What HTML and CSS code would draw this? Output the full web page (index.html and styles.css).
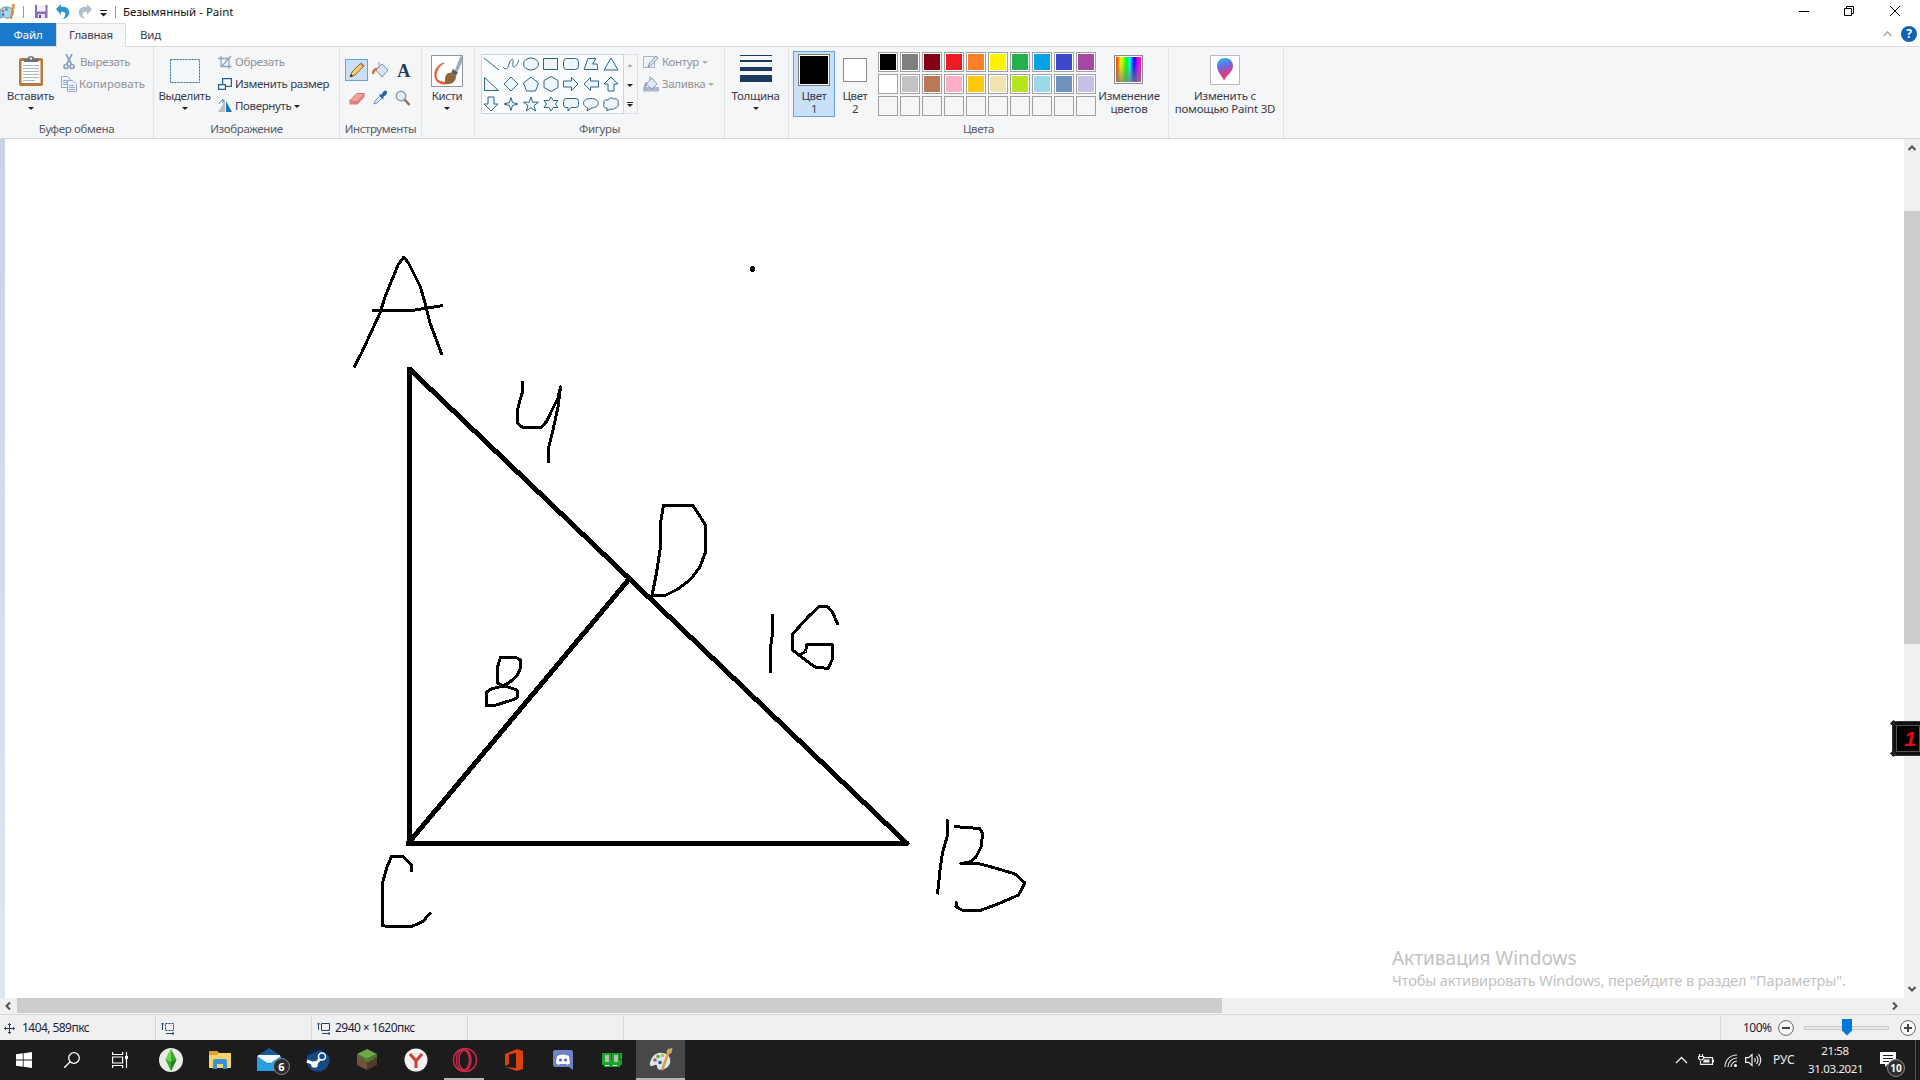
FILE: index.html
```html
<!DOCTYPE html>
<html lang="ru">
<head>
<meta charset="UTF-8">
<title>Безымянный - Paint</title>
<link rel="stylesheet" href="styles.css">
</head>
<body>
<div class="window">
    <header class="titlebar">
        <svg class="logo" width="16" height="18" viewBox="0 0 16 18">
            <path d="M0 7C3 3 10 3 13 7c1 3 0 7-5 8-3 1-3-2-5-1l-3 1z" fill="#a9d5ec" stroke="#5792b4"/>
            <circle cx="3" cy="8" r="1.3" fill="#e0524a"/><circle cx="6.500" cy="6.500" r="1.300" fill="#4aa53c"/><circle cx="3" cy="11.500" r="1.300" fill="#3468b8"/>
            <path d="M13 5L11 16" stroke="#d98b2f" stroke-width="2"/><path d="M11.500 5l.5-4h3l-.5 5z" fill="#dc9d53"/>
        </svg>
        <i class="bar"></i>
        <svg class="save" width="15" height="15" viewBox="0 0 15 15">
            <path d="M1 1h12.500v13H1z" fill="#8e6bb0"/><path d="M3 1h8.500v6.500H3z" fill="#f3f0f8"/><path d="M4 10h7v4H4z" fill="#e8e2f0"/><path d="M5 11h2v3H5z" fill="#654389"/>
        </svg>
        <svg class="undo" width="14" height="15" viewBox="0 0 14 15">
            <path d="M0 5l5-5v3c6-1 9 3 8 7-1 3-3 4-6 5 3-3 4-8-2-7v3z" fill="#2c94d1"/>
        </svg>
        <svg class="redo" width="14" height="15" viewBox="0 0 14 15">
            <path d="M14 5L9 0v3C3 2 0 6 1 10c1 3 3 4 6 5-3-3-4-8 2-7v3z" fill="#b3bfce"/>
        </svg>
        <svg class="more" width="7" height="7" viewBox="0 0 7 7"><path d="M0 0h7v1H0zM0 3h7L3.500 6.500z" fill="#222"/></svg>
        <i class="bar"></i>
        <span class="title">Безымянный - Paint</span>
        <svg class="controls" width="102" height="12" viewBox="0 0 102 12" fill="none" stroke="#000">
            <path d="M0 6.500h10"/>
            <path d="M45.500 3.500h7v7h-7zM47.500 3.500v-2h7v7h-2"/>
            <path d="M91 1l10 10M101 1L91 11"/>
        </svg>
    </header>
    <nav class="tabs">
        <a class="tab file">Файл</a>
        <a class="tab active">Главная</a>
        <a class="tab view">Вид</a>
        <svg class="collapse" width="9" height="6" viewBox="0 0 9 6"><path d="M.5 5l4-4 4 4" fill="none" stroke="#aaa" stroke-width="1.500"/></svg>
        <span class="help">?</span>
    </nav>
    <section class="ribbon">
        <div class="group clipboard">
            <div class="tools">
                <div class="big paste">
                    <svg width="28" height="32" viewBox="0 0 28 32">
                        <rect x="2" y="3" width="24" height="28" rx="2" fill="#b57a3c"/>
                        <path d="M4.500 6h19v22h-19z" fill="#fdfdfd"/>
                        <path d="M6 10.500h16M6 13.500h16M6 16.500h16M6 19.500h16M6 22.500h16M6 25.500h12" stroke="#a9b8c9"/>
                        <path d="M7 7V4h3.500c0-4 7-4 7 0H21v3z" fill="#68727e"/><circle cx="14" cy="3.500" r="1.200" fill="#e8edf2"/>
                    </svg>
                    <span>Вставить</span>
                    <b class="arrow"></b>
                </div>
                <ul class="list">
                    <li class="off">
                        <svg width="16" height="16" viewBox="0 0 16 16" fill="none" stroke="#8c9fc0" stroke-width="1.700"><path d="M5 0l5.500 10.500M11 0L5.500 10.500"/><circle cx="5" cy="12.500" r="2"/><circle cx="11" cy="12.500" r="2"/></svg>
                        <span>Вырезать</span>
                    </li>
                    <li class="off copy">
                        <svg width="16" height="16" viewBox="0 0 16 16" fill="#eef3fa" stroke="#94a9c8"><path d="M.5.5h6l3 3v8h-9z"/><path d="M2 4.500h4M2 6.500h4M2 8.500h4"/><path d="M6.500 4.500h5l4 3.500v7.500h-9z"/><path d="M8 9.500h5M8 11.500h6M8 13.500h6"/></svg>
                        <span>Копировать</span>
                    </li>
                </ul>
            </div>
            <h4>Буфер обмена</h4>
        </div>
        <div class="group image">
            <div class="tools">
                <div class="big select">
                    <svg width="30" height="32" viewBox="0 0 30 32"><path d="M.5 4.500h29v23H.5z" fill="#f2f7fb" stroke="#2f6ba4" stroke-dasharray="2 1"/></svg>
                    <span>Выделить</span>
                    <b class="arrow"></b>
                </div>
                <ul class="list">
                    <li class="off">
                        <svg width="14" height="14" viewBox="0 0 14 14" fill="none" stroke="#8fa3c4" stroke-width="1.300"><path d="M3 1v10.500h10.500M0 3.500h11V14M4 11l9-10"/></svg>
                        <span>Обрезать</span>
                    </li>
                    <li>
                        <svg width="14" height="14" viewBox="0 0 14 14" fill="#f5fafd" stroke="#235f8f" stroke-width="1.200"><path d="M4.600 1.600h8.800v7.800H4.600z"/><path d="M.6 7.600h6.800v4.800H.6z"/></svg>
                        <span>Изменить размер</span>
                    </li>
                    <li>
                        <svg width="14" height="14" viewBox="0 0 14 14"><path d="M7 2v11H0z" fill="#b9bec5"/><path d="M8 2v11h6z" fill="#1b76b5"/><path d="M1 5c1-3 3-4 5-3M4 0l2.500 2L4 4" fill="none" stroke="#3a8ac6"/></svg>
                        <span>Повернуть</span>
                        <b class="arrow"></b>
                    </li>
                </ul>
            </div>
            <h4>Изображение</h4>
        </div>
        <div class="group instruments">
            <div class="instr">
                <a class="on"><svg width="18" height="18" viewBox="0 0 18 18"><path d="M2 16l2-5L13 2l3 3-9 9z" fill="#f2cf65" stroke="#8a6a35"/><path d="M12 3l1.500-1.500 3 3L15 6z" fill="#d76b64"/><path d="M2 16l1-3 2 2z" fill="#222"/></svg></a>
                <a><svg width="18" height="18" viewBox="0 0 18 18"><path d="M5 9l6-6 6 6-6 7z" fill="#d6e5f4" stroke="#7b8ea8"/><path d="M8 6V1" stroke="#8b95a5"/><path d="M1 13c0-5 3-7 7-6-3 1-4 3-5 6z" fill="#e06a2c"/></svg></a>
                <a class="letter">A</a>
                <a><svg width="18" height="18" viewBox="0 0 18 18"><path d="M1.500 12L9 4.500h7.500l-7 8z" fill="#f2a5a0" stroke="#c9716c"/><path d="M1.500 12h8v3.500h-8zM9.500 12.500l7-8v3.500l-7 7.500z" fill="#de807b"/></svg></a>
                <a><svg width="18" height="18" viewBox="0 0 18 18"><path d="M3 15l1-3 5-5 2 2-5 5z" fill="#d7eaf6" stroke="#6b96b5"/><path d="M8 6l1-1 1 1 3-4c3-1 4 1 2 4l-3 2 1 1-1 1z" fill="#2463a4"/></svg></a>
                <a><svg width="18" height="18" viewBox="0 0 18 18"><circle cx="7" cy="7" r="4.700" fill="#e0eefa" stroke="#8e9aa8" stroke-width="1.500"/><path d="M10.500 10.500L15.500 16" stroke="#8b6d52" stroke-width="2.500"/></svg></a>
            </div>
            <h4>Инструменты</h4>
        </div>
        <div class="group brushes">
            <div class="big">
                <svg class="framed" width="32" height="32" viewBox="0 0 32 32">
                    <path d="M.5.500h31v31H.5z" fill="#fff" stroke="#8d959e"/>
                    <path d="M13 8C4 10 1 22 7 27c4 3 9 2 12 0-6 1-14 0-14-6 0-5 3-10 8-13z" fill="#e35b2a" stroke="#e35b2a"/>
                    <path d="M24 15L29 2l2-1v6l-4 9z" fill="#9babb9"/><path d="M22 14l5 3-2 4-5-3z" fill="#546370"/><path d="M14 26c0-6 2-9 6-8l5 3c0 6-5 9-11 8z" fill="#92643b"/>
                </svg>
                <span>Кисти</span>
                <b class="arrow"></b>
            </div>
        </div>
        <div class="group shapes">
            <div class="tools">
                <div class="gallery">
                    <svg viewBox="0 0 16 16"><path d="M1 2l15 12"/></svg>
                    <svg viewBox="0 0 16 16"><path class="open" d="M0 11c3 4 5 1 6-3 2-6 5-6 4-1-1 5 2 7 6-3"/></svg>
                    <svg viewBox="0 0 16 16"><ellipse cx="8" cy="8" rx="7.500" ry="6"/></svg>
                    <svg viewBox="0 0 16 16"><path d="M.5 2.500h14v11H.5z"/></svg>
                    <svg viewBox="0 0 16 16"><rect x=".5" y="2.500" width="15" height="11" rx="3"/></svg>
                    <svg viewBox="0 0 16 16"><path d="M1 13.500L5 2.500h8L9.500 8h4.500l1 5.500z"/></svg>
                    <svg viewBox="0 0 16 16"><path d="M8 2l7 12H1z"/></svg>
                    <svg viewBox="0 0 16 16"><path d="M1.500 1.500l14 13h-14z"/></svg>
                    <svg viewBox="0 0 16 16"><path d="M8 1l7 7-7 7-7-7z"/></svg>
                    <svg viewBox="0 0 16 16"><path d="M8 1l7.500 6-3 8h-9l-3-8z"/></svg>
                    <svg viewBox="0 0 16 16"><path d="M8 .5l7 4v7l-7 4-7-4v-7z"/></svg>
                    <svg viewBox="0 0 16 16"><path d="M.5 5h8V1.500l6.500 6.500-6.500 6.500V11h-8z"/></svg>
                    <svg viewBox="0 0 16 16"><path d="M15.500 5h-8V1.500L1 8l6.500 6.500V11h8z"/></svg>
                    <svg viewBox="0 0 16 16"><path d="M5 15V8H1l7-7 7 7h-4v7z"/></svg>
                    <svg viewBox="0 0 16 16"><path d="M5 1v7H1l7 7 7-7h-4V1z"/></svg>
                    <svg viewBox="0 0 16 16"><path d="M8 1.500l1.500 5L15 8l-5.500 1.500-1.500 5-1.500-5L1 8l5.500-1.500z"/></svg>
                    <svg viewBox="0 0 16 16"><path d="M8 1l1.800 5.200h5.700L11 9.600l1.700 5.400L8 11.700 3.300 15 5 9.600.5 6.200h5.700z"/></svg>
                    <svg viewBox="0 0 16 16"><path d="M8 1l2.200 3.500H15L12.500 8l2.500 3.500h-4.800L8 15l-2.200-3.500H1L3.500 8 1 4.500h4.800z"/></svg>
                    <svg viewBox="0 0 16 16"><path d="M3 2.500h10q2.500 0 2.500 3v3q0 3-2.500 3H8L5 15v-3.500H3q-2.500 0-2.500-3v-3q0-3 2.500-3z"/></svg>
                    <svg viewBox="0 0 16 16"><path d="M5 12L4 15l5-3c9-1 8-9.500-1-9.500S-2 9.500 5 12z"/></svg>
                    <svg viewBox="0 0 16 16"><path d="M4 12c-3 0-4-2-3-4-1-3 1-5 4-4 2-3 5-2 6-1 3-1 5 2 4 4 1 3-1 5-3 5-2 2-4 1-5 1l-3 2z"/></svg>
                </div>
                <div class="scroller">
                    <span><b class="arrow up"></b></span>
                    <span><b class="arrow"></b></span>
                    <span><b class="arrow lined"></b></span>
                </div>
                <ul class="list">
                    <li class="off">
                        <svg width="16" height="14" viewBox="0 0 16 14"><path d="M.5 1.500h11v11H.5z" fill="#edf3f9" stroke="#aab5c4"/><path d="M5 12l1.500-4L13 1l2 2-6.500 7z" fill="#dce4ee" stroke="#8795ad"/></svg>
                        <span>Контур</span>
                        <b class="arrow dim"></b>
                    </li>
                    <li class="off">
                        <svg width="16" height="16" viewBox="0 0 16 16"><path d="M0 11h16v4.500H0z" fill="#aab8cc"/><path d="M3 8l6-6 5 6-5 5z" fill="#e1e9f2" stroke="#8f9fb6"/><path d="M7 4V0" stroke="#8f9fb6"/><path d="M1 11c0-4 2-5 4-5l-2 5z" fill="#8fa1bd"/></svg>
                        <span>Заливка</span>
                        <b class="arrow dim"></b>
                    </li>
                </ul>
            </div>
            <h4>Фигуры</h4>
        </div>
        <div class="group size">
            <div class="big">
                <svg width="32" height="32" viewBox="0 0 32 32" fill="#1f3a5f"><path d="M0 0h32v1H0zM0 5h32v2H0zM0 12h32v4H0zM0 20h32v7H0z"/></svg>
                <span>Толщина</span>
                <b class="arrow"></b>
            </div>
        </div>
        <div class="group colors">
            <div class="tools">
                <div class="color first"><i></i><span>Цвет<br>1</span></div>
                <div class="color second"><i></i><span>Цвет<br>2</span></div>
                <div class="palette">
                    <i class="c-black"></i><i class="c-gray"></i><i class="c-darkred"></i><i class="c-red"></i><i class="c-orange"></i><i class="c-yellow"></i><i class="c-green"></i><i class="c-blue"></i><i class="c-indigo"></i><i class="c-purple"></i>
                    <i class="c-white"></i><i class="c-silver"></i><i class="c-brown"></i><i class="c-pink"></i><i class="c-gold"></i><i class="c-cream"></i><i class="c-lime"></i><i class="c-sky"></i><i class="c-steel"></i><i class="c-lavender"></i>
                    <i></i><i></i><i></i><i></i><i></i><i></i><i></i><i></i><i></i><i></i>
                </div>
                <div class="big edit">
                    <i class="rainbow"></i>
                    <span>Изменение<br>цветов</span>
                </div>
            </div>
            <h4>Цвета</h4>
        </div>
        <div class="group paint3d">
            <div class="big">
                <svg class="framed" width="30" height="30" viewBox="0 0 30 30">
                    <defs>
                        <linearGradient id="drop" x1="0" y1="0" x2=".3" y2="1"><stop offset="0" stop-color="#20c5e8"/><stop offset=".45" stop-color="#6a6be0"/><stop offset=".75" stop-color="#d63b8e"/><stop offset="1" stop-color="#ee4a4a"/></linearGradient>
                    </defs>
                    <path d="M.5.500h29v29H.5z" fill="#fff" stroke="#b4b8bd"/>
                    <path d="M15 3c5 0 8 3.500 8 8 0 6-6 8-9 15-1-4-7-9-7-15 0-4.500 3-8 8-8z" fill="url(#drop)"/>
                </svg>
                <span>Изменить с<br>помощью Paint 3D</span>
            </div>
        </div>
    </section>
    <main class="workspace">
        <div class="edge"></div>
        <div class="sheet">
            <svg class="drawing" width="1899" height="859" viewBox="5 139 1899 859">
                <!-- triangle -->
                <g class="thick">
                    <path d="M408 844L409.500 843V369L907 843.500H408L630 578"/>
                </g>
                <!-- handwriting -->
                <g class="thin">
                    <path d="M354 367.500L362 352l18-39 5-16 13-32 6-8 5 7 11.500 23 4.500 16 5 20 12 32"/>
                    <path d="M372 310.500h40l31-5"/>
                    <path d="M522.500 381v11l-2.500 8-3 12v11l6 4.500h18l6-6.500 5-11 6-12 2.500-11-2.500 20-5 23-4.500 18v14.500"/>
                    <path d="M693 505.500h-29.500l-2.500 14.500-1 30-3.500 23-4.500 22.500h13l12-6 13-9.500 10-13 5.500-15v-27z"/>
                    <path d="M500.500 657.500l-3 9.500v16l5.500 3 7-4 7.500-7 3-7v-8l-4.500-2.500z"/>
                    <path d="M503 686l-11.500 3-5 3v14l10-1 18.500-6 3-2.500-1-6.500-9-3z"/>
                    <path d="M772.500 614v20l-2 13v26"/>
                    <path d="M838 625l-5-12-5-6-9-.5-11 10.500-9 10-6 6.500-.5 16.500 9 7 13.500 10 13 1.500 4-8.500v-16h-25l-1.500 7.500-7.500 4.500"/>
                    <path d="M411.500 871.500V865l-8.500-8.500h-11.500L387 867l-4.500 16v42.500l4.500 1h24.500l11.500-5 7.500-9"/>
                    <path d="M948 819.500l-1 17.500-4.500 16-2.500 17-2.500 24.500"/>
                    <path d="M954 826.500l25.500 2 3 4.500-1 13-5.500 11-6 5-9 1.500h17l15.500 4 21.500 6.500 10 9-6.500 12-22 9.500-16.500 6-18.500-.5-5.500-3.500.5-5"/>
                </g>
                <circle cx="752.500" cy="269" r="3"/>
            </svg>
            <div class="watermark">
                <p>Активация Windows</p>
                <small>Чтобы активировать Windows, перейдите в раздел "Параметры".</small>
            </div>
        </div>
        <div class="vscroll">
            <svg width="8" height="6" viewBox="0 0 8 6"><path d="M.500 5L4 1.500 7.500 5"/></svg>
            <i></i>
            <svg width="8" height="6" viewBox="0 0 8 6"><path d="M.500 1L4 4.500 7.500 1"/></svg>
        </div>
        <div class="badge"><span>1</span></div>
    </main>
    <div class="hscroll">
        <svg width="6" height="8" viewBox="0 0 6 8"><path d="M5 .5L1.500 4 5 7.500"/></svg>
        <i></i>
        <svg width="6" height="8" viewBox="0 0 6 8"><path d="M1 .5L4.500 4 1 7.500"/></svg>
    </div>
    <footer class="status">
        <div class="cell pos">
            <svg width="11" height="11" viewBox="0 0 11 11" fill="none" stroke="#24426b"><path d="M5.500 0v11M0 5.500h11M4 2l1.500-1.500L7 2M4 9l1.500 1.500L7 9M2 4L.5 5.500 2 7M9 4l1.500 1.500L9 7"/></svg>
            <span>1404, 589пкс</span>
        </div>
        <div class="cell">
            <svg width="13" height="13" viewBox="0 0 13 13" fill="none" stroke="#24426b"><path d="M1.500 1v7M0 2.500L1.500 1 3 2.500M5 11.500h8M11.500 10l1.500 1.500-1.500 1.500"/><path d="M4.500 1.500h8v7h-8z" stroke-dasharray="2 1"/></svg>
        </div>
        <div class="cell">
            <svg width="13" height="13" viewBox="0 0 13 13" fill="none" stroke="#24426b"><path d="M1.500 1v7M0 2.500L1.500 1 3 2.500M5 11.500h8M11.500 10l1.500 1.500-1.500 1.500"/><path d="M4.500 1.500h8v7h-8z"/></svg>
            <span>2940 × 1620пкс</span>
        </div>
        <div class="cell"></div>
        <div class="cell rest"></div>
        <div class="zoom">
            <span>100%</span>
            <svg width="16" height="16" viewBox="0 0 16 16"><circle cx="8" cy="8" r="7.400"/><path d="M4 8h8"/></svg>
            <div class="slider"><i></i></div>
            <svg width="16" height="16" viewBox="0 0 16 16"><circle cx="8" cy="8" r="7.400"/><path d="M4 8h8M8 4v8"/></svg>
        </div>
    </footer>
</div>
<div class="taskbar">
    <a class="sys"><svg width="16" height="16" viewBox="0 0 16 16" fill="#fff"><path d="M0 2.300L6.800 1.300v6.300H0zM7.600 1.200L16 0v7.600H7.600zM0 8.400h6.800v6.300L0 13.700zM7.600 8.400H16V16l-8.400-1.200z"/></svg></a>
    <a class="sys"><svg width="16" height="16" viewBox="0 0 16 16" fill="none" stroke="#fff" stroke-width="1.300"><circle cx="10" cy="6" r="5.300"/><path d="M6.200 9.800L0 16"/></svg></a>
    <a class="sys"><svg width="16" height="16" viewBox="0 0 16 16" fill="none" stroke="#fff" stroke-width="1.200"><path d="M.600 0v2.500h10V0M.600 5h10v6H.600zM.600 16v-2.500h10V16M14.500 0v16"/><path d="M13 4h3v3h-3z" fill="#fff" stroke="none"/></svg></a>
    <a class="app"><svg width="26" height="26" viewBox="0 0 26 26"><circle cx="13" cy="13" r="12" fill="#e9e9e6"/><path d="M13 2l5.500 10.500L13 24 7.500 12.500z" fill="#39a82c"/><path d="M13 2l-5.500 10.500L13 15z" fill="#73d553"/><path d="M13 15l5.500-2.500L13 24z" fill="#1e7c20"/></svg></a>
    <a class="app"><svg width="24" height="24" viewBox="0 0 24 24"><path d="M1 3h8l2 2h12v15H1z" fill="#f7d56e"/><path d="M1 3h8l2 2-2 2H1z" fill="#dba52b"/><path d="M5 21v-8q0-2 2-2h10q2 0 2 2v8h-4v-5H9v5z" fill="#3993d3"/></svg></a>
    <a class="app mail"><svg width="26" height="24" viewBox="0 0 26 24"><path d="M1 8L13 0l12 8v15H1z" fill="#185a9d"/><path d="M2 7h22v8H2z" fill="#f1f8fd"/><path d="M1 8l12 8 12-8v15H1z" fill="#2a9fe3"/></svg><em class="count">6</em></a>
    <a class="app"><svg width="24" height="24" viewBox="0 0 24 24"><circle cx="12" cy="12" r="11.500" fill="#174a83"/><path d="M1 8A11.500 11.500 0 0 1 23 8L14 2z" fill="#0d2447"/><path d="M1 13l6 2.500 4-1 4-5" fill="none" stroke="#fff" stroke-width="3"/><circle cx="8.500" cy="16.500" r="3.300" fill="#fff"/><circle cx="16" cy="8.500" r="3.500" fill="#174a83" stroke="#fff" stroke-width="1.500"/></svg></a>
    <a class="app"><svg width="22" height="24" viewBox="0 0 22 24"><path d="M11 1l10 5-10 5L1 6z" fill="#6fa544"/><path d="M1 6l10 5v11L1 17z" fill="#74513a"/><path d="M21 6l-10 5v11l10-5z" fill="#523825"/><path d="M1 6l10 5 10-5v3l-3 1v2l-3 0-2 2-2 0-3-2-2-2-2 0-3-2z" fill="#4b7b2f"/></svg></a>
    <a class="app"><svg width="24" height="24" viewBox="0 0 24 24"><circle cx="12" cy="12" r="11.500" fill="#f1f1f1"/><path d="M6 6l6 7 6-7M12 12v8" fill="none" stroke="#d43c38" stroke-width="3"/></svg></a>
    <a class="app run"><svg width="26" height="26" viewBox="0 0 26 26" fill="none" stroke="#ce274a" stroke-width="1.500"><circle cx="13" cy="13" r="11.500"/><ellipse cx="13" cy="13" rx="6" ry="10"/><ellipse cx="11" cy="13" rx="6.500" ry="10.500"/></svg></a>
    <a class="app"><svg width="20" height="24" viewBox="0 0 20 24"><path d="M1 6l12-5 6 2v18l-6 2-12-4 11 1V5L5 6.500V16l-4 2z" fill="#d9430f"/></svg></a>
    <a class="app"><svg width="22" height="24" viewBox="0 0 22 24"><path d="M3 2h16q2 0 2 2v18l-4-3H3q-2 0-2-2V4q0-2 2-2z" fill="#6e82c4"/><path d="M5 8c4-2 8-2 12 0l1 7c-2 2-3 2-4 1h-6c-1 1-2 1-4-1z" fill="#fff"/><circle cx="8.500" cy="12" r="1.600" fill="#5267ab"/><circle cx="13.500" cy="12" r="1.600" fill="#5267ab"/></svg></a>
    <a class="app"><svg width="22" height="20" viewBox="0 0 22 20"><path d="M1 3h20v12h-2v2H3v-2H1z" fill="#1aa52c"/><path d="M4 5h4v7H4zM13 5h4v7h-4z" fill="#b5bdb6"/><path d="M10 3h1v7h-1zM18 3h1v6h2v1h-3z" fill="#0b5f18"/><path d="M4 15h4v1H4zM12 15h4v1h-4z" fill="#d8f4da"/></svg></a>
    <a class="app current"><svg width="26" height="26" viewBox="0 0 26 26"><path d="M3 13C6 5 14 4 20 8c4 4 3 12-4 14-5 2-7 0-7-3-1-3-4 1-6 0-2-1-1-4 0-6z" fill="#d5e9f5"/><circle cx="7" cy="13" r="1.800" fill="#c44f47"/><circle cx="10" cy="9.500" r="1.800" fill="#60a73e"/><circle cx="14.500" cy="8.500" r="1.800" fill="#e5b136"/><circle cx="12" cy="15.500" r="1.800" fill="#2f5691"/><path d="M20 7L14 23" stroke="#e69a3e" stroke-width="2.500"/><path d="M18.500 6l1-4 5-1-1 5-3.500 2z" fill="#d4a455"/></svg></a>
    <div class="tray">
        <svg class="chevron" width="13" height="8" viewBox="0 0 13 8" fill="none" stroke="#eee" stroke-width="1.400"><path d="M1 7l5.500-5.500L12 7"/></svg>
        <svg class="power" width="16" height="12" viewBox="0 0 16 12" fill="none" stroke="#eee" stroke-width="1.200"><path d="M6 3.600h8.500v6.800H2.500V7M1.500 0v2M4.500 0v2M.6 2.500h5v2q-2.500 3-5 0zM15.500 5.500v3"/><path d="M6 5.500h5.500v3H5z" fill="#eee" stroke="none"/></svg>
        <svg class="wifi" width="13" height="13" viewBox="0 0 13 13" fill="none" stroke="#ddd" stroke-width="1.200"><path d="M1 13C1 6 6 1 13 1M4 13c0-5 4-9 9-9M7 13c0-3 3-6 6-6"/><circle cx="11.500" cy="11.500" r="1.500" fill="#fff" stroke="none"/></svg>
        <svg class="volume" width="17" height="14" viewBox="0 0 17 14" fill="none" stroke="#eee" stroke-width="1.200"><path d="M.6 4.600h3L7 1.500v11L3.600 9.400h-3zM9.500 5q1.500 2 0 4M11.500 3q3 4 0 8M13.500 1q4.500 6 0 12"/></svg>
        <span class="lang">РУС</span>
        <div class="clock">21:58<br>31.03.2021</div>
        <div class="notes">
            <svg width="17" height="16" viewBox="0 0 17 16"><path d="M0 0h16v12H8l-3 3v-3H0z" fill="#fff"/><path d="M3 3.500h10M3 6.500h10M3 9.500h6" stroke="#1c1c1c"/></svg>
            <em class="count">10</em>
        </div>
        <i class="peek"></i>
    </div>
</div>
</body>
</html>
```
FILE: styles.css
```css
* {box-sizing: border-box;}
body {margin: 0;width: 1920px;height: 1080px;overflow: hidden;background: #fff;font: 12px/16px "Noto Sans", "Open Sans", sans-serif;color: #3b3b4d;}
ul, p, h4 {margin: 0;padding: 0;list-style: none;font-weight: normal;}
i, em {font-style: normal;}
svg {display: block;flex: none;}
.window {display: flex;flex-direction: column;height: 1040px;}

/* title */
.titlebar {display: flex;align-items: center;height: 23px;}
.titlebar .bar {width: 1px;height: 12px;background: #999;}
.logo {margin-right: 7px;}
.save {margin: 0 7px 0 10px;}
.undo {margin-right: 8px;}
.redo {margin-right: 8px;}
.more {margin: 4px 8px 0 0;}
.title {margin-left: 7px;color: #111;font-size: 11.5px;}
.controls {margin: -2px 19px 0 auto;}

/* tabs */
.tabs {display: flex;height: 24px;border-bottom: 1px solid #dadbdc;}
.tab {height: 23px;line-height: 23px;text-align: center;font-size: 11.5px;letter-spacing: -.2px;}
.file {width: 56px;background: #1979ca;color: #fff;}
.active {width: 70px;height: 24px;border: 1px solid #dadbdc;border-bottom: 0;background: #f5f6f7;line-height: 22px;}
.view {width: 49px;}
.collapse {margin: 8px 9px 0 auto;}
.help {width: 16px;height: 16px;margin: 3px 3px 0 0;border-radius: 50%;background: #1262b3;color: #fff;font-weight: bold;text-align: center;}

/* ribbon */
.ribbon {display: flex;height: 92px;background: #f5f6f7;border-bottom: 1px solid #d4d6d8;letter-spacing: -.35px;}
.group {display: flex;flex-direction: column;justify-content: space-between;padding-top: 2px;height: 91px;border-right: 1px solid #e2e3e4;}
.group h4 {height: 18px;line-height: 17px;text-align: center;color: #5a5a66;font-size: 11.5px;}
.tools {display: flex;}
.big {display: flex;flex-direction: column;align-items: center;padding-top: 6px;text-align: center;font-size: 11.5px;line-height: 13px;white-space: nowrap;}
.big span {margin-top: 2px;}
.big .arrow {margin-top: 5px;}
.arrow {border: 3px solid transparent;border-top-color: #222;border-bottom: 0;}
.arrow.dim {border-top-color: #b0b0b0;}
.arrow.up {border-top: 0;border-bottom: 3px solid #b0b0b0;}
.list {font-size: 11.5px;white-space: nowrap;}
.list li {display: flex;align-items: center;gap: 3px;height: 22px;}
.off {color: #929298;}
.clipboard {width: 154px;}
.paste {width: 61px;}
.clipboard .list {padding: 2px 0 0 0;}
.list .copy {gap: 2px;letter-spacing: 0;}
.image {width: 186px;}
.select {width: 61px;}
.image .list {padding: 2px 0 0 3px;}
.instruments {width: 82px;}
.instr {display: grid;grid-template-columns: repeat(3, 23px);grid-auto-rows: 22px;row-gap: 6px;padding: 10px 0 0 5px;}
.instr a {display: flex;align-items: center;justify-content: center;}
.instr .on {border: 1px solid #62a2e4;background: #c9e0f7;}
.instr .letter {padding: 3px 0 0 2px;font: bold 18px "Liberation Serif", serif;color: #1f3d63;}
.brushes {width: 53px;}
.brushes .big {padding-right: 2px;}
.shapes {width: 250px;}
.gallery {display: grid;grid-template-columns: repeat(7, 20px);grid-auto-rows: 20px;width: 143px;height: 60px;margin: 5px 0 0 6px;border: 1px solid #d0d5db;background: #fbfcfd;}
.gallery svg {width: 16px;height: 16px;margin: 1px;fill: #eef6fb;stroke: #2c6590;}
.gallery .open {fill: none;}
.scroller {width: 14px;height: 60px;margin-top: 5px;border: 1px solid #dcdfe3;border-left: 0;}
.scroller span {display: flex;align-items: center;justify-content: center;height: 20px;padding-right: 1px;}
.scroller .lined {position: relative;}
.scroller .lined::before {content: "";position: absolute;left: -3px;top: -5px;width: 6px;height: 1px;background: #222;}
.shapes .list {padding: 2px 0 0 5px;}
.size {width: 64px;}
.size .big {padding-right: 2px;}
.colors {width: 380px;}
.color {display: flex;flex-direction: column;align-items: center;height: 66px;margin-top: 2px;font-size: 11.5px;line-height: 13px;text-align: center;}
.color i {border: 1px solid #8a8a8a;background: #fff;}
.first {width: 42px;margin-left: 4px;border: 1px solid #62a2e4;background: #c9e0f7;}
.first i {width: 32px;height: 32px;margin: 2px 0 3px;border: 1px solid #777;box-shadow: inset 0 0 0 1px #fff;background: #000;}
.second {width: 40px;margin-right: 2px;}
.second i {width: 24px;height: 24px;margin: 7px 0 7px;}
.palette {display: grid;grid-template-columns: repeat(10, 20px);grid-auto-rows: 20px;gap: 2px;margin: 3px 0 0 1px;}
.palette i {border: 1px solid #a0a0a0;box-shadow: inset 0 0 0 1px #fff;}
.palette i:nth-child(n+21) {box-shadow: none;}
.c-black {background: #000;}
.c-gray {background: #7f7f7f;}
.c-darkred {background: #880015;}
.c-red {background: #ed1c24;}
.c-orange {background: #ff7f27;}
.c-yellow {background: #fff200;}
.c-green {background: #22b14c;}
.c-blue {background: #00a2e8;}
.c-indigo {background: #3f48cc;}
.c-purple {background: #a349a4;}
.c-white {background: #fff;}
.c-silver {background: #c3c3c3;}
.c-brown {background: #b97a57;}
.c-pink {background: #ffaec9;}
.c-gold {background: #ffc90e;}
.c-cream {background: #efe4b0;}
.c-lime {background: #b5e61d;}
.c-sky {background: #99d9ea;}
.c-steel {background: #7092be;}
.c-lavender {background: #c8bfe7;}
.edit {width: 66px;}
.rainbow {width: 29px;height: 29px;margin: 0 2px 3px 0;border: 1px solid #8a8a8a;box-shadow: inset 0 0 0 1px #fff;background: linear-gradient(transparent 20%, #808080cc), linear-gradient(90deg, #f00, #ff0 22%, #0f0 42%, #0ff 55%, #00f 70%, #f0f 88%, #f04);}
.edit, .paint3d .big {letter-spacing: -.2px;}
.paint3d {width: 115px;}
.paint3d .big {padding-right: 2px;}
.paint3d svg {margin-bottom: 2px;}

/* canvas */
.workspace {position: relative;display: flex;height: 859px;}
.edge {width: 5px;background: linear-gradient(#c6d4e4, #dce7f3);}
.sheet {position: relative;width: 1899px;height: 859px;background: #fff;}
.drawing {shape-rendering: crispEdges;}
.drawing path {fill: none;stroke: #000;stroke-linejoin: round;}
.thick path {stroke-width: 5px;}
.thin path {stroke-width: 3px;}
.watermark {position: absolute;left: 1387px;top: 805px;color: #c2c2c2;white-space: nowrap;}
.watermark p {font-size: 19px;line-height: 28px;}
.watermark small {display: block;font-size: 14.5px;line-height: 16px;letter-spacing: -.09px;}
.vscroll {display: flex;flex-direction: column;align-items: center;width: 16px;padding: 6px 0;background: #f0f0f0;}
.vscroll i {width: 16px;height: 433px;margin: 60px 0 auto;background: #cdcdcd;}
.vscroll path, .hscroll path {fill: none;stroke: #505050;stroke-width: 2px;}
.badge {position: absolute;right: 0;top: 583px;width: 27px;height: 33px;border: 3px solid #111;border-right: 0;outline: 1px solid #333;background: #000;box-shadow: inset 0 0 0 1px #555;padding-left: 4px;color: #f00612;font: italic bold 21px/27px "Liberation Sans", sans-serif;text-align: center;}
.badge::before, .badge::after {content: "";position: absolute;left: -5px;width: 5px;height: 5px;background: #222;transform: rotate(45deg);}
.badge::before {top: -4px;}
.badge::after {bottom: -4px;}
.hscroll {display: flex;align-items: flex-start;height: 16px;padding: 0 22px 0 5px;background: #f0f0f0;}
.hscroll svg {margin-top: 4px;}
.hscroll i {width: 1205px;height: 15px;margin: 0 auto 0 6px;background: #cdcdcd;}

/* status bar */
.status {display: flex;height: 26px;border-top: 1px solid #d7d7d7;background: #f0f0f0;color: #1e1e3c;font-size: 12px;}
.cell {display: flex;align-items: center;gap: 5px;width: 156px;margin-top: 1px;padding-left: 5px;border-right: 1px solid #d7d7d7;letter-spacing: -.55px;white-space: nowrap;}
.pos {gap: 7px;padding-left: 4px;}
.rest {width: 1097px;}
.zoom {display: flex;align-items: center;padding-left: 22px;}
.zoom svg {fill: #f7f7f7;stroke: #666;}
.zoom svg path {stroke-width: 2px;stroke: #444;}
.zoom span {width: 35px;letter-spacing: -.5px;}
.slider {width: 85px;height: 4px;margin: 0 11px 0 10px;border: 1px solid #ccc;background: #e7e7e7;}
.slider i {display: block;width: 10px;height: 17px;margin: -8px 0 0 37px;background: #0078d7;clip-path: polygon(0 0, 100% 0, 100% 70%, 50% 100%, 0 70%);}

/* taskbar */
.taskbar {display: flex;height: 40px;background: #1c1c1c;color: #eee;}
.taskbar a {position: relative;display: flex;align-items: center;justify-content: center;width: 49px;}
.taskbar .sys {width: 48px;}
.sys + .app {margin-left: 2px;}
.run::after, .current::after {content: "";position: absolute;left: 4px;bottom: 0;width: 40px;height: 2px;background: #b5b5b5;}
.current {background: #484848;}
.current::after {left: 0;width: 49px;}
.count {display: flex;align-items: center;justify-content: center;width: 17px;height: 17px;border: 1px solid #8c8c8c;border-radius: 50%;background: #2d2d2d;color: #fff;font-size: 11px;font-weight: bold;}
.mail .count {position: absolute;right: 3px;top: 18px;}
.tray {display: flex;align-items: center;width: 245px;margin-left: auto;}
.chevron {margin-right: 10px;}
.power {margin-right: 10px;}
.wifi {margin-right: 8px;}
.volume {margin-right: 11px;}
.lang {width: 23px;margin-right: 12px;}
.clock {width: 54px;line-height: 18px;text-align: center;font-size: 11.5px;letter-spacing: -.35px;white-space: nowrap;}
.notes {position: relative;margin-left: 18px;}
.notes .count {position: absolute;left: 7px;top: 7px;width: 18px;height: 18px;font-size: 10px;}
.peek {width: 1px;height: 40px;margin: 0 4px 0 auto;background: #555;}
```
